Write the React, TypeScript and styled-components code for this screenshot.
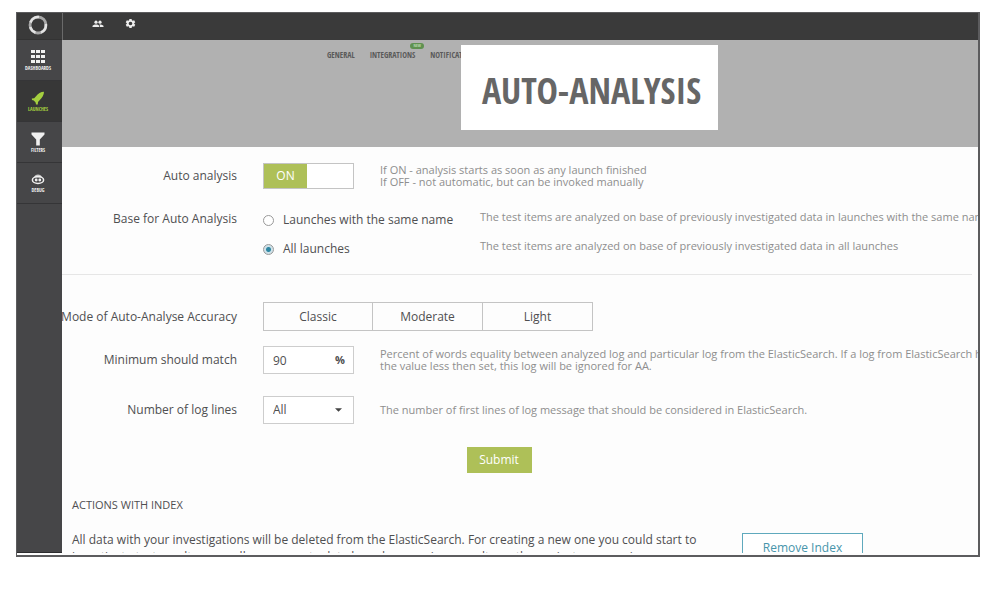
import React, { useState } from "react";
import styled, { createGlobalStyle } from "styled-components";

const condensed = `"Open Sans Condensed", "Roboto Condensed", "Liberation Sans Narrow", "Open Sans", sans-serif`;

const GlobalStyle = createGlobalStyle`
  *, *::before, *::after { box-sizing: border-box; }
  body {
    margin: 0;
    background: #fff;
    color: #4f4f51;
    font-family: "Open Sans", sans-serif;
    font-size: 12px;
    line-height: 16px;
  }
  button, input, select { font: inherit; color: inherit; }
`;

const Page = styled.div`
  height: 100vh;
  padding: 12px 20px 32px 16px;
`;

const Frame = styled.div`
  display: grid;
  grid-template-columns: 45px minmax(0, 1fr);
  grid-template-rows: minmax(0, 1fr);
  height: 100%;
  padding-bottom: 2px;
  border: 1px solid #5c5c5e;
  border-right-width: 2px;
  border-bottom-width: 2px;
  background: #fdfdfd;
`;

const Sidebar = styled.nav`
  display: flex;
  flex-direction: column;
  overflow: hidden;
  background: #464648;
  border-bottom: 1px solid #2c2c2e;
`;

const Logo = styled.a`
  display: flex;
  align-items: center;
  justify-content: center;
  height: 27px;
  padding: 0 3px 2px 0;
  background: #3a3a3a;
  border-bottom: 1px solid #333;
`;

const SideLink = styled.a<{ $active?: boolean }>`
  display: flex;
  flex-direction: column;
  align-items: center;
  justify-content: center;
  gap: 1px;
  height: 41px;
  padding-right: 3px;
  background: ${(p) => (p.$active ? "#373737" : "transparent")};
  border-bottom: 1px solid #353537;
  color: ${(p) => (p.$active ? "#a5cf3f" : "#f0f0f0")};
  font-family: ${condensed};
  font-size: 5px;
  font-weight: 700;
  line-height: 6px;
  text-decoration: none;
  text-transform: uppercase;
`;

const Main = styled.main`
  display: flex;
  flex-direction: column;
  min-width: 0;
  overflow: hidden;
`;

const TopBar = styled.header`
  display: flex;
  flex: none;
  align-items: center;
  gap: 21px;
  height: 27px;
  padding: 0 30px 6px 29px;
  background: #3a3a3a;
  border-left: 1px solid #6a6a6a;
`;

const IconButton = styled.button`
  display: flex;
  padding: 0;
  border: 0;
  background: none;
  color: #eee;
`;

const Banner = styled.section`
  position: relative;
  flex: none;
  height: 107px;
  padding: 9px 0 0 265px;
  background: #b1b1b1;
`;

const Tabs = styled.nav`
  display: flex;
  gap: 15px;
`;

const Tab = styled.a`
  position: relative;
  color: #5a5a5a;
  font-family: ${condensed};
  font-size: 8px;
  font-weight: 700;
  line-height: 12px;
  text-decoration: none;
`;

const NewBadge = styled.span`
  position: absolute;
  top: -6px;
  right: -9px;
  width: 14px;
  height: 6px;
  border-radius: 3px;
  background: #5f9150;
  color: #b9d6ae;
  font-size: 4px;
  line-height: 6px;
  text-align: center;
`;

const TitleCard = styled.div`
  position: absolute;
  top: 5px;
  left: 399px;
  display: flex;
  align-items: center;
  justify-content: center;
  width: 257px;
  height: 85px;
  padding: 6px 0 0 4px;
  background: #fff;
`;

const Title = styled.h1`
  margin: 0;
  color: #666;
  font-family: ${condensed};
  font-size: 36px;
  font-weight: 700;
  line-height: 48px;
  white-space: nowrap;
`;

const Form = styled.form`
  flex: none;
`;

const Group = styled.div<{ $divided?: boolean }>`
  display: flex;
  flex-direction: column;
  gap: ${(p) => (p.$divided ? "22px" : "15px")};
  margin-right: 6px;
  padding: ${(p) => (p.$divided ? "16px 0 17px" : "27px 0 23px")};
  border-bottom: ${(p) => (p.$divided ? "1px solid #e6e6e6" : "0")};
`;

const Row = styled.div<{ $top?: boolean; $spaced?: boolean }>`
  display: grid;
  grid-template-columns: 175px minmax(0, 1fr);
  column-gap: 26px;
  align-items: ${(p) => (p.$top ? "start" : "center")};
  padding-top: ${(p) => (p.$spaced ? "7px" : "0")};
`;

const RowLabel = styled.span`
  display: flex;
  justify-content: flex-end;
  white-space: nowrap;
`;

const Field = styled.div`
  display: flex;
  align-items: center;
  gap: 26px;
`;

const Hint = styled.p`
  margin: 0;
  color: #8e8e8e;
  font-size: 11px;
  line-height: 12px;
  white-space: nowrap;
`;

const Switch = styled.button`
  display: grid;
  flex: none;
  grid-template-columns: 43px 1fr;
  width: 91px;
  height: 26px;
  padding: 0;
  border: 1px solid #c4c4c4;
  background: #fff;
`;

const SwitchState = styled.span<{ $on: boolean }>`
  grid-column: ${(p) => (p.$on ? 1 : 2)};
  background: ${(p) => (p.$on ? "#aec058" : "#999")};
  color: #fff;
  line-height: 24px;
`;

const Options = styled.div`
  display: flex;
  flex-direction: column;
  gap: 12px;
`;

const Option = styled.div`
  display: grid;
  grid-template-columns: 217px minmax(0, 1fr);
  align-items: start;
`;

const OptionLabel = styled.label`
  display: flex;
  align-items: center;
  gap: 9px;
  padding-top: 1px;
`;

const Radio = styled.input`
  appearance: none;
  flex: none;
  width: 11px;
  height: 11px;
  margin: 0;
  border: 1px solid #999;
  border-radius: 50%;
  background: #fff;
  &:checked {
    background: radial-gradient(circle, #2f87a3 0 2px, #cfe2e9 3px);
  }
`;

const Segments = styled.div`
  display: flex;
`;

const Segment = styled.button`
  width: 110px;
  height: 29px;
  padding: 0;
  border: 1px solid #c4c4c4;
  border-left-width: 0;
  background: #fdfdfd;
  &:first-child {
    border-left-width: 1px;
  }
`;

const Box = styled.div`
  position: relative;
  display: flex;
  flex: none;
  align-items: center;
  width: 91px;
  height: 28px;
  border: 1px solid #cdcdcd;
  background: #fff;
`;

const NumberInput = styled.input`
  width: 100%;
  min-width: 0;
  height: 100%;
  padding: 0 9px;
  border: 0;
  outline: 0;
  background: none;
`;

const Unit = styled.span`
  padding-right: 8px;
  font-size: 11px;
  font-weight: 700;
`;

const Select = styled.select`
  appearance: none;
  width: 100%;
  height: 100%;
  padding: 0 9px;
  border: 0;
  outline: 0;
  background: none;
`;

const Caret = styled.svg`
  position: absolute;
  right: 11px;
  pointer-events: none;
`;

const Actions = styled.div`
  display: flex;
  justify-content: center;
  padding-right: 42px;
`;

const Submit = styled.button`
  width: 65px;
  height: 26px;
  padding: 0;
  border: 0;
  background: #aec058;
  color: #fff;
`;

const IndexSection = styled.section`
  flex: none;
  padding: 24px 10px 0;
`;

const SectionTitle = styled.h2`
  margin: 0 0 18px;
  font-size: 11px;
  font-weight: 400;
  line-height: 16px;
`;

const IndexRow = styled.div`
  display: grid;
  grid-template-columns: 640px 121px;
  column-gap: 30px;
  align-items: start;
`;

const IndexText = styled.p`
  margin: 0;
  line-height: 17px;
`;

const RemoveButton = styled.button`
  height: 30px;
  margin-top: 2px;
  padding: 0;
  border: 1px solid #5fa9bd;
  background: #fff;
  color: #4795ab;
`;

function LogoIcon() {
  return (
    <svg width="20" height="20" viewBox="0 0 20 20" fill="none" aria-hidden="true">
      <circle cx="10" cy="10" r="8" stroke="#a8a8a8" strokeWidth="2.8" />
      <path d="M2.500 7.500A8 8 0 0 1 11 2.100M17.800 9A8 8 0 0 1 13 17.400M7.500 17.500A8 8 0 0 1 2.300 12" stroke="#e4e4e4" strokeWidth="2.5" />
    </svg>
  );
}

function PeopleIcon() {
  return (
    <svg width="12" height="8" viewBox="0 0 12 8" fill="currentColor" aria-hidden="true">
      <circle cx="4" cy="2.2" r="1.6" />
      <circle cx="8" cy="2.2" r="1.6" />
      <path d="M0.5 7V6C0.5 4.9 2.5 4.4 4 4.4S7.3 4.9 7.3 6V7Z M8 7V6C8 5.3 7.7 4.8 7.3 4.4C9 4.3 11.5 4.9 11.5 6V7Z" />
    </svg>
  );
}

function GearIcon() {
  return (
    <svg width="11" height="11" viewBox="0 0 24 24" fill="currentColor" aria-hidden="true">
      <path
        fillRule="evenodd"
        d="M9.5 2h5l.5 3 2 1.200 2.900-1.200 2.500 4.300-2.400 1.900v1.600l2.400 1.900-2.500 4.300L17 17.800 15 19l-.5 3h-5L9 19l-2-1.200L4.100 19l-2.500-4.300L4 12.800v-1.600L1.600 9.300 4.100 5 7 6.200 9 5ZM12 8a4 4 0 1 0 0 8 4 4 0 0 0 0-8Z"
      />
    </svg>
  );
}

function GridIcon() {
  return (
    <svg width="14" height="14" viewBox="0 0 14 14" fill="currentColor" aria-hidden="true">
      {[0, 5, 10].map((y) => [0, 5, 10].map((x) => <rect key={`${x}-${y}`} x={x} y={y} width="4" height="3" />))}
    </svg>
  );
}

function RocketIcon() {
  return (
    <svg width="14" height="14" viewBox="0 0 14 14" fill="currentColor" aria-hidden="true">
      <path d="M13 .8C9.800 .8 7 2.600 4.800 5.600L3.200 7.200.8 7.400 1 9 2.800 9.600 4.600 11.400 5 13.400 6.800 13.400 7 11 8.600 9.200C11.200 6.800 13 4 13 .8Z" />
    </svg>
  );
}

function FilterIcon() {
  return (
    <svg width="14" height="14" viewBox="0 0 14 14" fill="currentColor" aria-hidden="true">
      <path d="M.5.5H13.500V2.500L8.800 7.500V13.500H5.200V7.500L.5 2.500Z" />
    </svg>
  );
}

function DebugIcon() {
  return (
    <svg width="14" height="12" viewBox="0 0 14 12" aria-hidden="true">
      <path d="M3 3.500C3.300 1.400 5 .5 7 .5S10.700 1.400 11 3.500" fill="#c4c4c4" />
      <ellipse cx="7" cy="6" rx="5.600" ry="3.400" fill="none" stroke="currentColor" strokeWidth="1.500" />
      <circle cx="5.200" cy="6" r="1.400" fill="currentColor" />
      <circle cx="8.800" cy="6" r="1.400" fill="currentColor" />
    </svg>
  );
}

export default function App() {
  const [on, setOn] = useState(true);
  const [base, setBase] = useState("all");

  return (
    <>
      <GlobalStyle />
      <Page>
        <Frame>
          <Sidebar aria-label="Main">
            <Logo href="#" aria-label="Home"><LogoIcon /></Logo>
            <SideLink href="#"><GridIcon />Dashboards</SideLink>
            <SideLink href="#" $active><RocketIcon />Launches</SideLink>
            <SideLink href="#"><FilterIcon />Filters</SideLink>
            <SideLink href="#"><DebugIcon />Debug</SideLink>
          </Sidebar>
          <Main>
            <TopBar>
              <IconButton type="button" aria-label="Members"><PeopleIcon /></IconButton>
              <IconButton type="button" aria-label="Settings"><GearIcon /></IconButton>
            </TopBar>
            <Banner>
              <Tabs aria-label="Settings">
                <Tab href="#">GENERAL</Tab>
                <Tab href="#">INTEGRATIONS<NewBadge>NEW</NewBadge></Tab>
                <Tab href="#">NOTIFICATIONS</Tab>
              </Tabs>
              <TitleCard><Title>AUTO-ANALYSIS</Title></TitleCard>
            </Banner>
            <Form onSubmit={(e) => e.preventDefault()}>
              <Group $divided>
                <Row>
                  <RowLabel id="auto">Auto analysis</RowLabel>
                  <Field>
                    <Switch type="button" role="switch" aria-checked={on} aria-labelledby="auto" onClick={() => setOn(!on)}>
                      <SwitchState $on={on}>{on ? "ON" : "OFF"}</SwitchState>
                    </Switch>
                    <Hint>
                      If ON - analysis starts as soon as any launch finished
                      <br />
                      If OFF - not automatic, but can be invoked manually
                    </Hint>
                  </Field>
                </Row>
                <Row $top>
                  <RowLabel id="base">Base for Auto Analysis</RowLabel>
                  <Options role="radiogroup" aria-labelledby="base">
                    <Option>
                      <OptionLabel>
                        <Radio type="radio" name="base" checked={base === "same"} onChange={() => setBase("same")} />
                        Launches with the same name
                      </OptionLabel>
                      <Hint>The test items are analyzed on base of previously investigated data in launches with the same name</Hint>
                    </Option>
                    <Option>
                      <OptionLabel>
                        <Radio type="radio" name="base" checked={base === "all"} onChange={() => setBase("all")} />
                        All launches
                      </OptionLabel>
                      <Hint>The test items are analyzed on base of previously investigated data in all launches</Hint>
                    </Option>
                  </Options>
                </Row>
              </Group>
              <Group>
                <Row>
                  <RowLabel id="mode">Mode of Auto-Analyse Accuracy</RowLabel>
                  <Segments role="group" aria-labelledby="mode">
                    <Segment type="button">Classic</Segment>
                    <Segment type="button">Moderate</Segment>
                    <Segment type="button">Light</Segment>
                  </Segments>
                </Row>
                <Row>
                  <RowLabel as="label" htmlFor="match">Minimum should match</RowLabel>
                  <Field>
                    <Box>
                      <NumberInput id="match" defaultValue="90" />
                      <Unit>%</Unit>
                    </Box>
                    <Hint>
                      Percent of words equality between analyzed log and particular log from the ElasticSearch. If a log from ElasticSearch has
                      <br />
                      the value less then set, this log will be ignored for AA.
                    </Hint>
                  </Field>
                </Row>
                <Row $spaced>
                  <RowLabel as="label" htmlFor="lines">Number of log lines</RowLabel>
                  <Field>
                    <Box>
                      <Select id="lines" defaultValue="All">
                        <option>All</option>
                      </Select>
                      <Caret width="7" height="4" viewBox="0 0 8 4" aria-hidden="true">
                        <path d="M0 0H8L4 4Z" fill="#444" />
                      </Caret>
                    </Box>
                    <Hint>The number of first lines of log message that should be considered in ElasticSearch.</Hint>
                  </Field>
                </Row>
              </Group>
              <Actions>
                <Submit type="submit">Submit</Submit>
              </Actions>
            </Form>
            <IndexSection>
              <SectionTitle>ACTIONS WITH INDEX</SectionTitle>
              <IndexRow>
                <IndexText>
                  All data with your investigations will be deleted from the ElasticSearch. For creating a new one you could start to
                  investigate test results manually or generate data based on previous results on the project once again
                </IndexText>
                <RemoveButton type="button">Remove Index</RemoveButton>
              </IndexRow>
            </IndexSection>
          </Main>
        </Frame>
      </Page>
    </>
  );
}
